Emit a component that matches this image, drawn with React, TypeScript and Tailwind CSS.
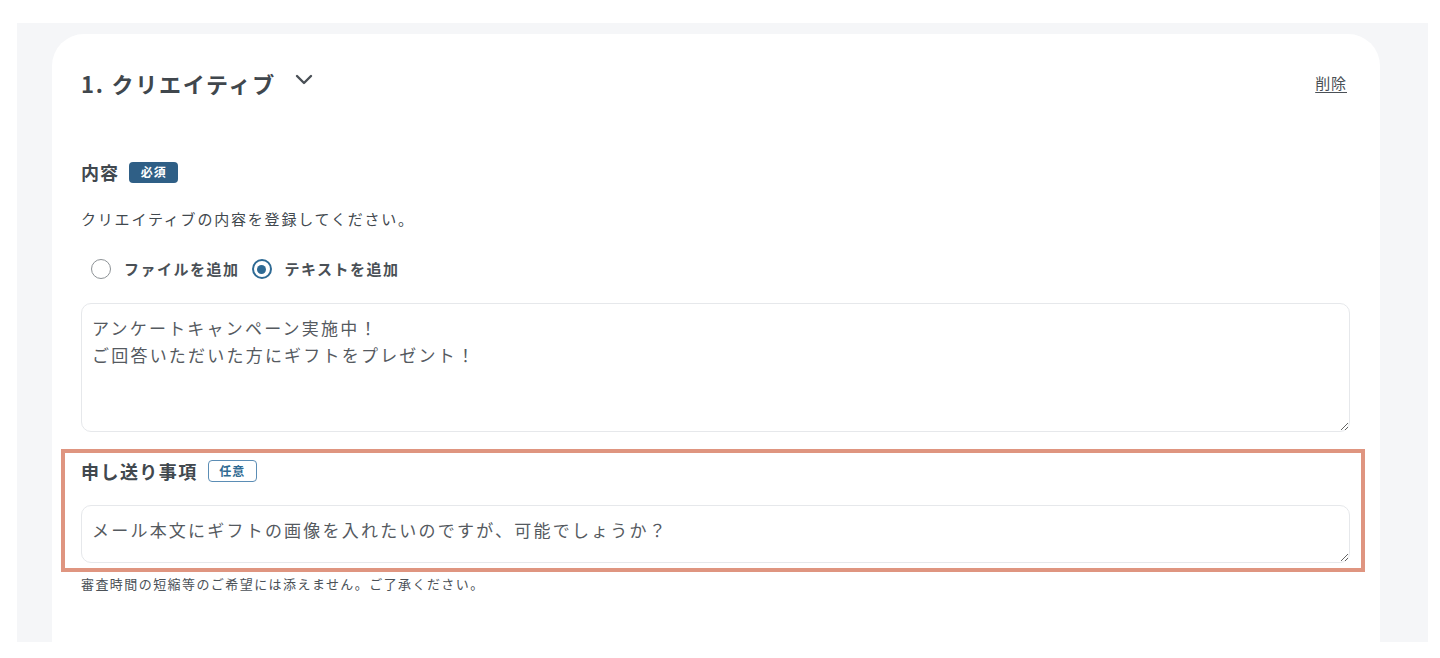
import { useState } from "react";

type Mode = "file" | "text";

function Radio({
	checked,
	label,
	onClick,
}: {
	checked: boolean;
	label: string;
	onClick: () => void;
}) {
	return (
		<button
			type="button"
			onClick={onClick}
			className="flex items-center gap-[13px]"
		>
			<span
				className={`flex h-[20px] w-[20px] items-center justify-center rounded-full bg-white ${
					checked
						? "border-2 border-[#2e6a94]"
						: "border-[1.5px] border-[#8d9296]"
				}`}
			>
				{checked && (
					<span className="h-[9px] w-[9px] rounded-full bg-[#2e6a94]" />
				)}
			</span>
			<span className="text-[15px] font-bold tracking-[0.1em] text-[#4a5056]">
				{label}
			</span>
		</button>
	);
}

export default function App() {
	const [mode, setMode] = useState<Mode>("text");

	return (
		<div className="min-h-[658px] bg-white pt-[23px] pl-[17px] pr-[12px] font-['Noto_Sans_CJK_JP',sans-serif] text-[#41484e]">
			<div className="h-[619px] overflow-hidden bg-[#f5f6f8] pt-[11px] pl-[35px] pr-[48px]">
				<div className="min-h-[700px] rounded-t-[32px] bg-white px-[29px] pr-[30px] pt-[32px]">
					{/* Section header */}
					<div className="flex h-[34px] items-center justify-between">
						<div className="flex items-center gap-[19px]">
							<h2 className="text-[22px] font-bold tracking-[0.08em] text-[#40474d]">
								1. クリエイティブ
							</h2>
							<svg
								width="18"
								height="11"
								viewBox="0 0 18 11"
								fill="none"
								className="mb-[8px]"
							>
								<path
									d="M2 2L9 9L16 2"
									stroke="#4a5056"
									strokeWidth="2.4"
									strokeLinecap="round"
									strokeLinejoin="round"
								/>
							</svg>
						</div>
						<button
							type="button"
							className="pr-[3px] text-[15px] tracking-[0.06em] text-[#4a5056] underline underline-offset-[3px]"
						>
							削除
						</button>
					</div>

					{/* 内容 */}
					<div className="mt-[61px] flex h-[22px] items-center gap-[10px]">
						<span className="text-[18px] font-bold tracking-[0.06em] text-[#41484e]">
							内容
						</span>
						<span className="flex h-[21px] w-[49px] items-center justify-center rounded-[4px] bg-[#2f5f86] text-[12px] font-bold tracking-[0.08em] text-white">
							必須
						</span>
					</div>
					<p className="mt-[24px] text-[15px] leading-[24px] tracking-[0.12em] text-[#41484e]">
						クリエイティブの内容を登録してください。
					</p>
					<div className="mt-[26px] flex h-[24px] items-center gap-[12px] pl-[10px]">
						<Radio
							checked={mode === "file"}
							label="ファイルを追加"
							onClick={() => setMode("file")}
						/>
						<Radio
							checked={mode === "text"}
							label="テキストを追加"
							onClick={() => setMode("text")}
						/>
					</div>
					<textarea
						className="mt-[22px] block h-[129px] w-full rounded-[10px] border border-[#e6e8eb] bg-white p-[10px] text-[17px] leading-[27px] tracking-[0.13em] text-[#555a5f] outline-none"
						defaultValue={
							"アンケートキャンペーン実施中！\nご回答いただいた方にギフトをプレゼント！"
						}
					/>

					{/* 申し送り事項 */}
					<div className="mt-[17px] -ml-[20px] -mr-[15px] border-4 border-[#df9580] pt-[7px] pb-[5px] pl-[16px] pr-[11px]">
						<div className="flex h-[22px] items-center gap-[10px]">
							<span className="text-[18px] font-bold tracking-[0.08em] text-[#41484e]">
								申し送り事項
							</span>
							<span className="flex h-[22px] w-[49px] items-center justify-center rounded-[4px] border border-[#5b8db5] bg-white text-[12px] font-bold tracking-[0.08em] text-[#2f6a92]">
								任意
							</span>
						</div>
						<textarea
							className="mt-[23px] block h-[58px] w-full rounded-[10px] border border-[#e6e8eb] bg-white p-[10px] text-[17px] leading-[27px] tracking-[0.13em] text-[#555a5f] outline-none"
							defaultValue="メール本文にギフトの画像を入れたいのですが、可能でしょうか？"
						/>
					</div>
					<p className="mt-[3px] text-[13px] leading-[18px] tracking-[0.11em] text-[#4b5157]">
						審査時間の短縮等のご希望には添えません。ご了承ください。
					</p>
				</div>
			</div>
		</div>
	);
}
